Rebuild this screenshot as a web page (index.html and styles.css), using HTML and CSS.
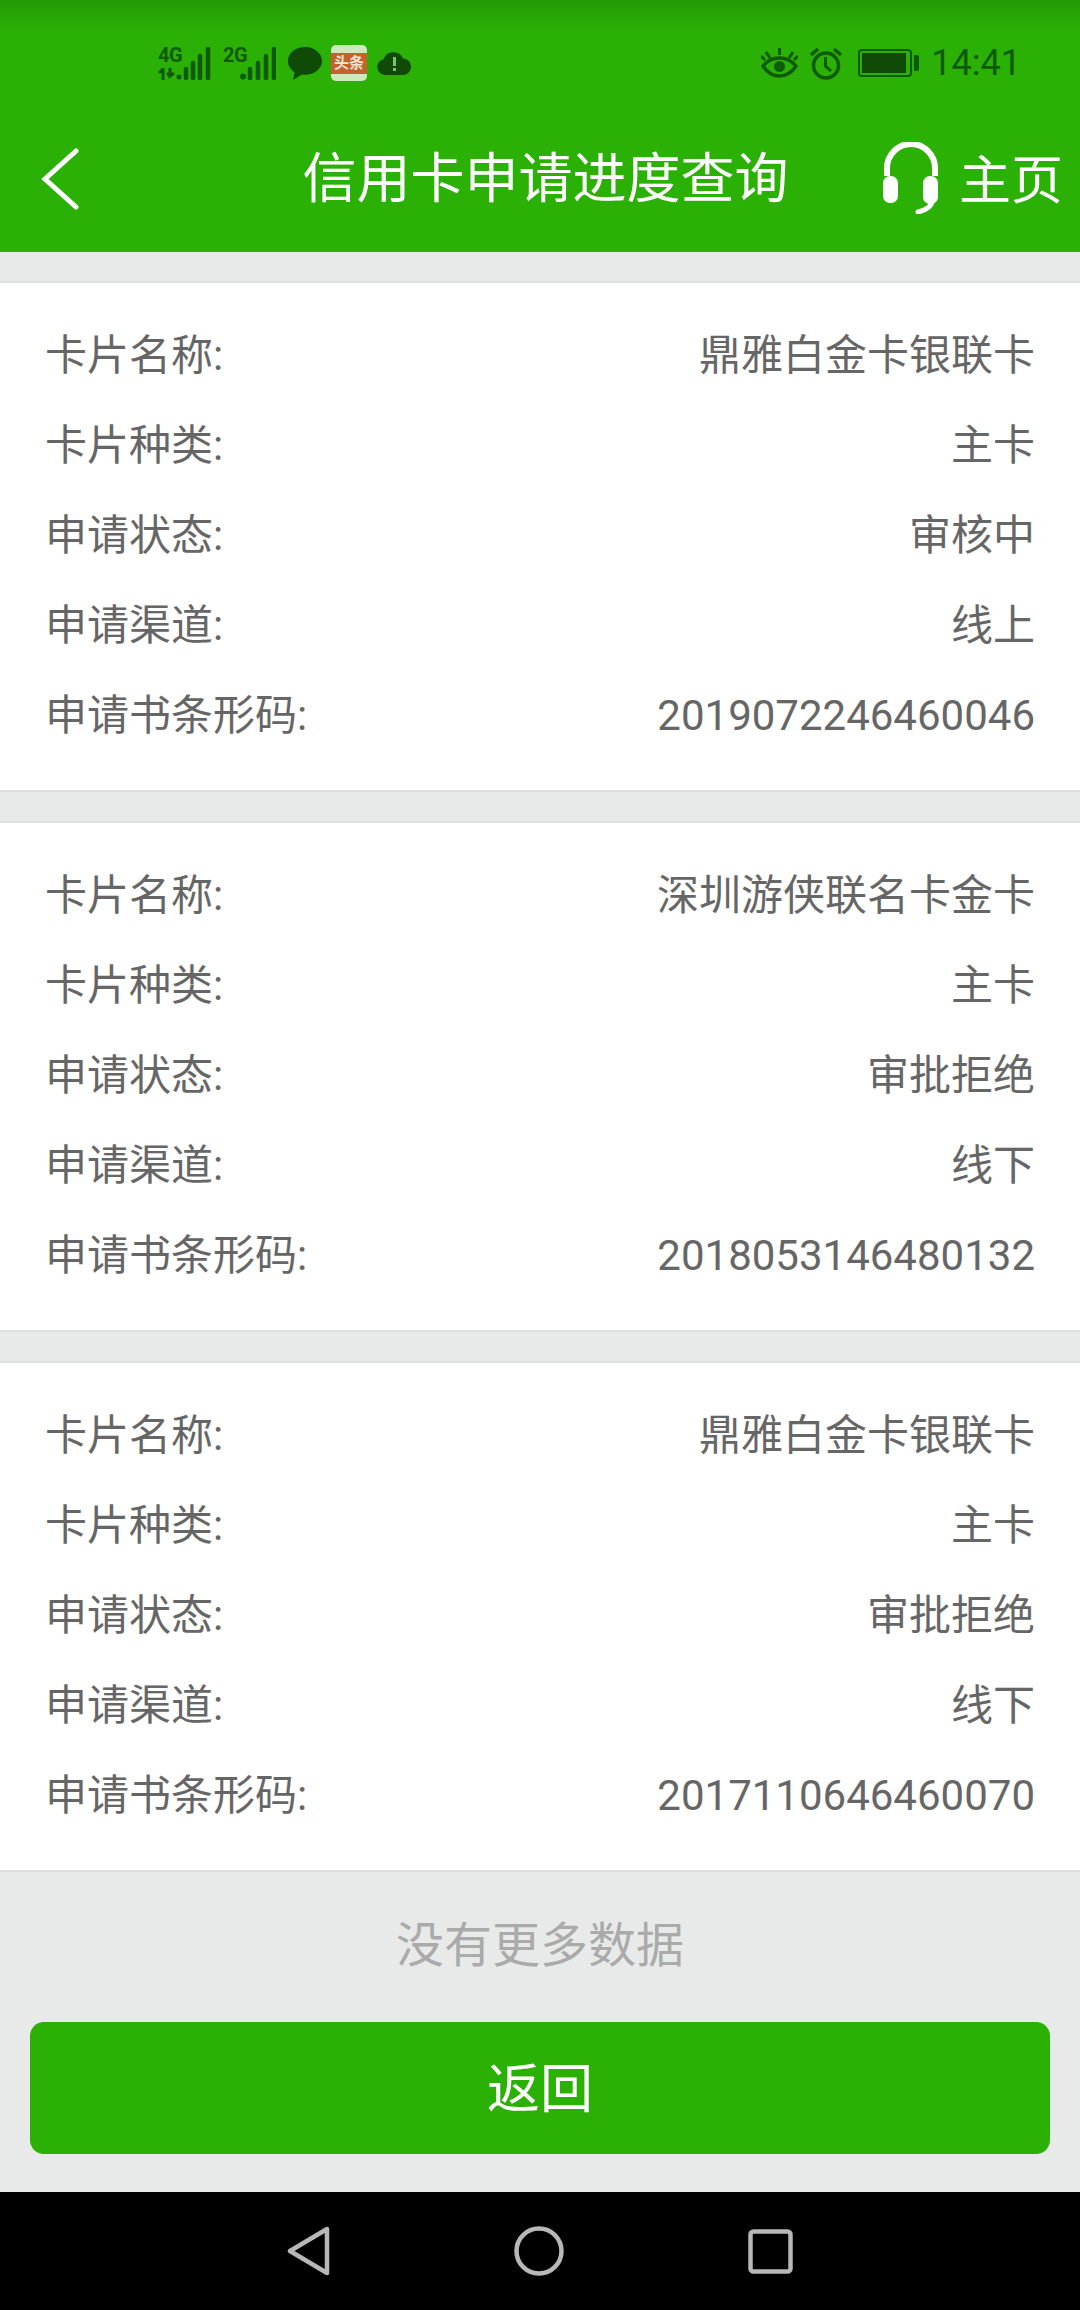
FILE: index.html
```html
<!DOCTYPE html>
<html lang="zh-CN">
<head>
    <meta charset="UTF-8">
    <title>信用卡申请进度查询</title>
    <link rel="stylesheet" href="styles.css">
</head>
<body>
    <div class="header">
        <!-- 状态栏 -->
        <div class="status">
            <div class="status-left">
                <div class="sim">
                    <div class="sim-text">
                        <span class="net">4G</span>
                        <svg class="updown" width="25" height="12" viewBox="0 0 25 12"><path d="M1 5l4-4v11M12 0v8l4-3M12 8l-3-3" fill="none" stroke="#0f5a04" stroke-width="3"/><circle cx="21" cy="9" r="2.5" fill="#0f5a04"/></svg>
                    </div>
                    <svg width="28" height="33" viewBox="0 0 28 33"><path d="M3 31v-9M10 31V16M17 31V9M25 31V2" fill="none" stroke="#0f5a04" stroke-width="4.500" stroke-linecap="round"/></svg>
                </div>
                <div class="sim sim2">
                    <div class="sim-text"><span class="net">2G</span></div>
                    <svg width="36" height="33" viewBox="0 0 36 33"><circle cx="3" cy="29.500" r="3" fill="#0f5a04"/><path d="M10 31v-9M18 31V16M26 31V9M34 31V2" fill="none" stroke="#0f5a04" stroke-width="4.500" stroke-linecap="round"/></svg>
                </div>
                <svg class="ic-bubble" width="34" height="33" viewBox="0 0 34 33"><path d="M17 0C7.600 0 0 6 0 14c0 4.600 2.500 8.600 6.500 11.200L5 33l9-5.500c1 .2 2 .3 3 .3 9.400 0 17-6.200 17-13.800S26.400 0 17 0z" fill="#0f4a06"/></svg>
                <div class="toutiao"><span class="toutiao-text">头条</span></div>
                <svg class="ic-cloud" width="35" height="24" viewBox="0 0 35 24"><path d="M8 24a8 8 0 0 1-1.500-15.800A10.500 10.500 0 0 1 26 7.500 8.300 8.300 0 0 1 27 24z" fill="#0f4a06"/><path d="M16 6h3v9h-3zM16 17h3v3h-3z" fill="#7fc26a"/></svg>
            </div>
            <div class="status-right">
                <svg width="37" height="30" viewBox="0 0 37 30"><path d="M2 18c4-5 10-8 16.500-8S31 13 35 18c-4 6-10 10-16.500 10S6 24 2 18z" fill="none" stroke="#0f5a04" stroke-width="3.500"/><circle cx="18.500" cy="18.500" r="5.500" fill="#0f5a04"/><path d="M18.500 0v7M5 4l4 6M32 4l-4 6M0 8l4 4M37 8l-4 4" stroke="#0f5a04" stroke-width="3"/></svg>
                <svg width="32" height="33" viewBox="0 0 32 33"><circle cx="16" cy="18.500" r="12.500" fill="none" stroke="#0f5a04" stroke-width="3.500"/><path d="M15.500 10v9l5.500 5" fill="none" stroke="#0f5a04" stroke-width="3"/><path d="M1 8l7-6M31 8l-7-6" stroke="#0f5a04" stroke-width="3.500"/></svg>
                <div class="battery">
                    <div class="battery-body"><div class="battery-level"></div></div>
                    <div class="battery-tip"></div>
                </div>
                <span class="time">14:41</span>
            </div>
        </div>
        <!-- 标题栏 -->
        <div class="titlebar">
            <div class="back">
                <svg width="38" height="62" viewBox="0 0 38 62"><path d="M35 3L4 31l31 28" fill="none" stroke="#fff" stroke-width="5" stroke-linecap="round"/></svg>
            </div>
            <h1 class="title">信用卡申请进度查询</h1>
            <div class="home">
                <svg width="56" height="72" viewBox="0 0 56 72"><path d="M4 34V26a24 24 0 0 1 48 0v8" fill="none" stroke="#fff" stroke-width="6"/><rect x="0" y="34" width="15" height="27" rx="7" fill="#fff"/><rect x="40" y="34" width="15" height="28" rx="7" fill="#fff"/><path d="M49 60c-1 5-6 8-14 10" fill="none" stroke="#fff" stroke-width="5" stroke-linecap="round"/></svg>
                <span>主页</span>
            </div>
        </div>
    </div>

    <div class="content">
        <div class="card">
            <div class="row"><span>卡片名称:</span><span>鼎雅白金卡银联卡</span></div>
            <div class="row"><span>卡片种类:</span><span>主卡</span></div>
            <div class="row"><span>申请状态:</span><span>审核中</span></div>
            <div class="row"><span>申请渠道:</span><span>线上</span></div>
            <div class="row"><span>申请书条形码:</span><span class="code">2019072246460046</span></div>
        </div>
        <div class="card">
            <div class="row"><span>卡片名称:</span><span>深圳游侠联名卡金卡</span></div>
            <div class="row"><span>卡片种类:</span><span>主卡</span></div>
            <div class="row"><span>申请状态:</span><span>审批拒绝</span></div>
            <div class="row"><span>申请渠道:</span><span>线下</span></div>
            <div class="row"><span>申请书条形码:</span><span class="code">2018053146480132</span></div>
        </div>
        <div class="card">
            <div class="row"><span>卡片名称:</span><span>鼎雅白金卡银联卡</span></div>
            <div class="row"><span>卡片种类:</span><span>主卡</span></div>
            <div class="row"><span>申请状态:</span><span>审批拒绝</span></div>
            <div class="row"><span>申请渠道:</span><span>线下</span></div>
            <div class="row"><span>申请书条形码:</span><span class="code">2017110646460070</span></div>
        </div>
        <div class="nomore">没有更多数据</div>
        <button class="btn-back">返回</button>
    </div>

    <!-- 虚拟导航键 -->
    <div class="navbar">
        <svg width="43" height="50" viewBox="0 0 43 50"><path d="M3 25L40 3v44z" fill="none" stroke="#b8b8b8" stroke-width="4.500" stroke-linejoin="round"/></svg>
        <svg width="50" height="50" viewBox="0 0 50 50"><circle cx="25" cy="25" r="22.500" fill="none" stroke="#b8b8b8" stroke-width="4.500"/></svg>
        <svg width="45" height="45" viewBox="0 0 45 45"><rect x="2.500" y="2.500" width="40" height="40" rx="3" fill="none" stroke="#b8b8b8" stroke-width="4.500"/></svg>
    </div>
</body>
</html>
```

FILE: styles.css
```css
* {box-sizing: border-box}
html, body {margin: 0; padding: 0}
body {width: 1080px; height: 2310px; display: flex; flex-direction: column; background: #e8eaea;
      font-family: Roboto, "Noto Sans CJK SC", sans-serif; overflow: hidden}

.header {height: 252px; flex: none; background: #2bb006}
.status {height: 88px; display: flex; justify-content: space-between; align-items: center; padding: 38px 59px 0 158px; background: linear-gradient(#239a05 0, #2bb006 30px)}
.status-left, .status-right {display: flex; align-items: center}
.sim {display: flex; align-items: flex-end; height: 33px; width: 53px}
.sim2 {margin-left: 12px}
.sim-text {width: 25px; display: flex; flex-direction: column; height: 33px}
.net {font-family: "Liberation Sans Narrow", Roboto, sans-serif; font-size: 20px; line-height: 16px; font-weight: 700; color: #0f5a04; letter-spacing: -0.5px}
.updown {margin-top: 5px}
.sim2 .sim-text {width: 17px}
.ic-bubble {margin-left: 12px}
.toutiao {margin-left: 9px; width: 36px; height: 36px; border-radius: 5px; background: #cfe8c0; display: flex; align-items: center}
.toutiao-text {width: 100%; height: 21px; background: #c2622f; color: #f3e6d0; font-size: 15px; line-height: 21px; font-weight: 700; text-align: center; white-space: nowrap}
.ic-cloud {margin-left: 10px}
.status-right svg + svg {margin-left: 12px}
.battery {margin-left: 16px; display: flex; align-items: center}
.battery-body {width: 54px; height: 28px; border: 2px solid #0f5a04; border-radius: 4px; padding: 2px}
.battery-level {width: 44px; height: 100%; background: #0f4a06}
.battery-tip {margin-left: 2px; width: 5px; height: 16px; background: #0f5a04; border-radius: 0 2px 2px 0}
.time {margin-left: 12px; font-size: 36px; line-height: 40px; color: #0f5a04}

.titlebar {height: 164px; padding-top: 18px; display: grid; grid-template-columns: 1fr auto 1fr; align-items: center; color: #fff}
.back {padding-left: 41px; display: flex}
.title {margin: 2px 0 0 11px; font-size: 54px; font-weight: 400; line-height: 70px; white-space: nowrap}
.home {display: flex; justify-content: flex-end; align-items: center; padding-right: 17px; font-size: 52px}
.home span {margin: -6px 0 0 20px}
.home svg {margin-top: -2px}

.content {flex: 1; padding-top: 29px}
.card {background: #fff; border-top: 2px solid #dedfdf; border-bottom: 2px solid #dedfdf; padding: 23px 45px 34px 45px; margin-bottom: 29px; color: #666; font-size: 42px}
.card:nth-child(3) {margin-bottom: 0}
.row {height: 90px; display: flex; justify-content: space-between; align-items: center}
.code {padding-top: 9px}

.nomore {height: 150px; padding-bottom: 12px; display: flex; justify-content: center; align-items: center; font-size: 48px; color: #aaa}
.btn-back {display: block; margin: 0 auto; padding: 0 0 6px; width: 1020px; height: 132px; border: 0; border-radius: 14px; background: #2bb006; color: #fff; font-family: inherit; font-size: 53px}

.navbar {height: 118px; flex: none; background: #000; display: flex; justify-content: center; align-items: center; gap: 184px}
```
